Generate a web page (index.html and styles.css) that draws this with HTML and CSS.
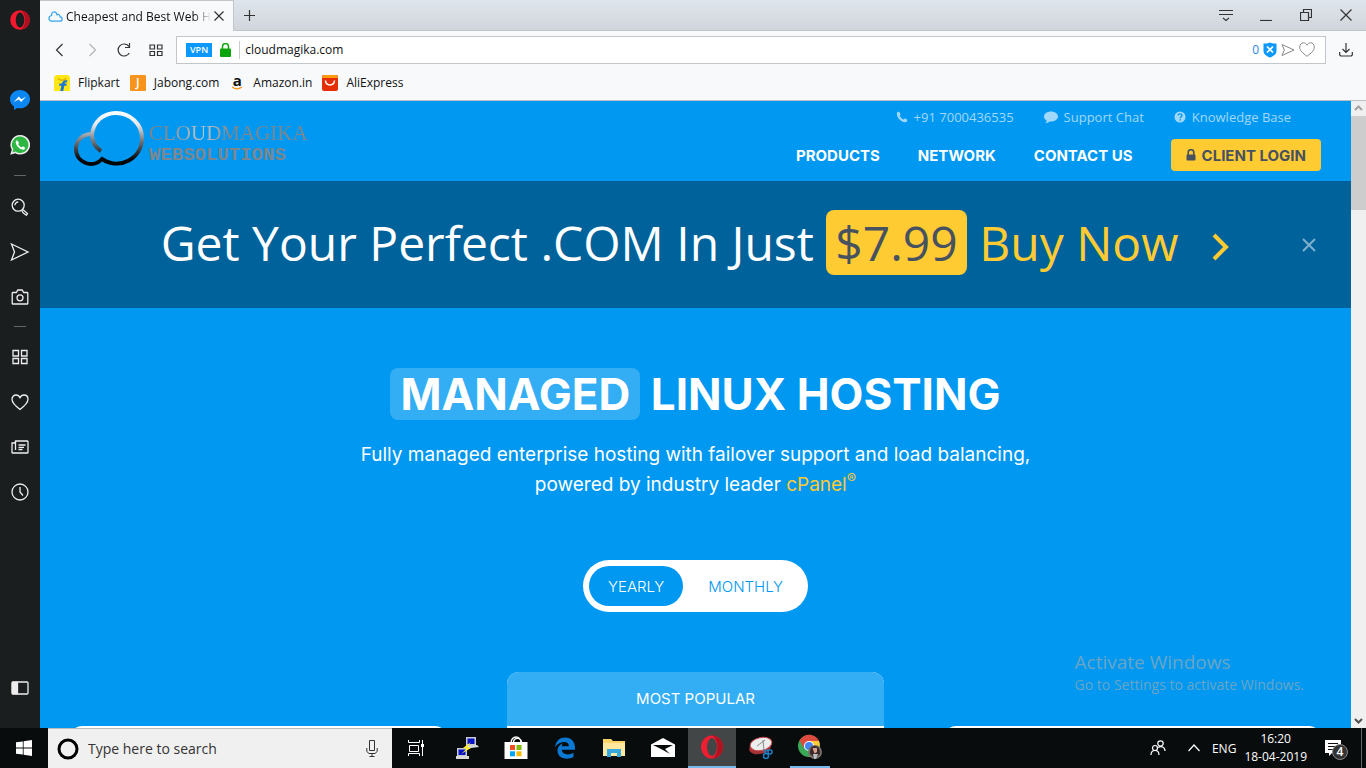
FILE: index.html
```
<!DOCTYPE html>
<html lang="en">
<head>
  <meta charset="UTF-8">
  <meta name="viewport" content="width=device-width, initial-scale=1.0">
  <title>Cheapest and Best Web Hosting</title>
  <link rel="stylesheet" href="styles.css">
</head>
<body>
  <div class="desktop">
    <aside class="sidebar">
      <button class="opera-btn" aria-label="Opera menu">
        <svg width="20" height="20" viewBox="0 0 20 20"><ellipse cx="10" cy="10" rx="9.8" ry="9.8" fill="#f4192e"/><path d="M10 .2a9.8 9.8 0 0 1 0 19.6c3-1 5-5 5-9.800s-2-8.800-5-9.800z" fill="#b0101e"/><ellipse cx="10" cy="10" rx="4.300" ry="7.500" fill="#1b1e1f"/></svg>
      </button>
      <button class="first" aria-label="Messenger">
        <svg width="20" height="20" viewBox="0 0 20 20"><path d="M10 0C4.500 0 0 4 0 9.200c0 3 1.500 5.600 4 7.300V20l3.500-2c.8.200 1.600.3 2.500.3 5.500 0 10-4 10-9.100S15.500 0 10 0z" fill="#0a86f5"/><path d="M3.800 12 8.800 6.600l2.600 2.600 4.800-2.600-5 5.400-2.500-2.600z" fill="#fff"/></svg>
      </button>
      <button aria-label="WhatsApp">
        <svg width="20" height="20" viewBox="0 0 20 20"><path d="M10.200 0A9.800 9.800 0 0 0 1.800 14.800L.2 19.800l5.200-1.500A9.800 9.800 0 1 0 10.200 0z" fill="#eee"/><path d="M10.200 1.600a8.200 8.200 0 0 0-6.800 12.900l-1 3 3.200-.9a8.200 8.200 0 1 0 4.600-15z" fill="#2db742"/><path d="M7 5.200c-1.200.6-1.600 2-1 3.600 1 2.700 3.200 4.900 6 5.800 1.700.5 3-.3 3.200-1.900l-2.300-1.400-1.300 1.200c-1.700-.7-2.800-1.800-3.500-3.400L9.200 8z" fill="#fff"/></svg>
      </button>
      <hr>
      <button aria-label="Search">
        <svg width="18" height="18" viewBox="0 0 18 18"><circle cx="7.200" cy="7.200" r="6"/><path d="M4 7.200a3.200 3.200 0 0 1 3.200-3.200M11.500 11.500l1.500 1 3.500 3-1.200 1.700-3.400-2.700-1-2"/></svg>
      </button>
      <button aria-label="My Flow">
        <svg width="20" height="20" viewBox="0 0 20 20"><path d="M1.500 2 18 10 1.500 18l3-8z"/></svg>
      </button>
      <button aria-label="Snapshot">
        <svg width="18" height="18" viewBox="0 0 18 18"><path d="M1.700 4.500h3.600l1.500-2.500h4.400l1.500 2.500h3.600l.5.500v10.500l-.5.500H1.700l-.5-.5V5z"/><circle cx="9" cy="9.800" r="3"/></svg>
      </button>
      <hr class="short">
      <button aria-label="Speed Dial">
        <svg width="18" height="18" viewBox="0 0 18 18"><path d="M2 2.500h5.500V8H2zM10.500 2.500H16V8h-5.500zM2 10.500h5.500v5H2zM10.500 10.500H16v5h-5.500z"/></svg>
      </button>
      <button aria-label="Bookmarks">
        <svg width="18" height="18" viewBox="0 0 18 18"><path d="M9 16.500C4 12.700 1 9.800 1 6.300 1 3.700 2.800 2 5 2c1.800 0 3.200 1 4 2.600C9.800 3 11.200 2 13 2c2.200 0 4 1.700 4 4.300 0 3.500-3 6.400-8 10.200z"/></svg>
      </button>
      <button aria-label="Personal news">
        <svg width="18" height="18" viewBox="0 0 18 18"><path d="M4.500 3h12l.5.500v11l-.5.500h-15l-.5-.5V5h3zM4.500 3v9M7.500 7h7M7.500 9.300H13M7.500 11.500h4"/></svg>
      </button>
      <button aria-label="History">
        <svg width="18" height="18" viewBox="0 0 18 18"><circle cx="9" cy="9" r="8"/><path d="M9 4v5l3 3.500"/></svg>
      </button>
      <button class="last" aria-label="Sidebar setup">
        <svg width="18" height="18" viewBox="0 0 18 18"><rect x="1" y="3" width="16" height="12" rx="1"/><path d="M1.500 3.500h5v11h-5z" fill="#eee"/></svg>
      </button>
    </aside>

    <div class="browser">
      <div class="tab-strip">
        <div class="tab">
          <svg width="15" height="11" viewBox="0 0 15 11" fill="none" stroke="#35a3ee" stroke-width="1.300"><path d="M3.500 10.200h8.200c3.200 0 3.200-4 .3-4.300.3-2-1.800-3-2.900-2C8-.2 3.200 0 3.600 4.500.2 5 0 9.700 3.500 10.200z"/></svg>
          <span class="tab-title">Cheapest and Best Web H</span>
          <button class="tab-close" aria-label="Close tab"><svg width="10" height="10" viewBox="0 0 10 10"><path d="m.5.500 9 9m0-9-9 9"/></svg></button>
        </div>
        <button class="new-tab" aria-label="New tab"><svg width="11" height="11" viewBox="0 0 11 11"><path d="M5.500 0v11M0 5.500h11"/></svg></button>
        <div class="window-buttons">
          <button aria-label="Tab menu"><svg width="14" height="13" viewBox="0 0 14 13"><path d="M0 1.500h14M0 5.500h14M4 9l3 2.500L10 9"/></svg></button>
          <button aria-label="Minimize"><svg width="12" height="12" viewBox="0 0 12 12"><path d="M0 11.500h12"/></svg></button>
          <button aria-label="Restore"><svg width="12" height="12" viewBox="0 0 12 12"><path d="M.5 3.500h8v8h-8zM3.500 3V.5h8v8H9"/></svg></button>
          <button aria-label="Close window"><svg width="12" height="12" viewBox="0 0 12 12"><path d="m.5.500 11 11m0-11-11 11"/></svg></button>
        </div>
      </div>

      <div class="address-row">
        <div class="nav-buttons">
          <button aria-label="Back"><svg width="16" height="16" viewBox="0 0 16 16"><path d="M10.500 2 4.500 8l6 6"/></svg></button>
          <button class="off" aria-label="Forward"><svg width="16" height="16" viewBox="0 0 16 16"><path d="m5.500 2 6 6-6 6"/></svg></button>
          <button aria-label="Reload"><svg width="16" height="16" viewBox="0 0 16 16"><path d="M13.300 11A6 6 0 1 1 13 4.500M13.500 1v4.500H9"/></svg></button>
          <button aria-label="Speed Dial"><svg width="16" height="16" viewBox="0 0 16 16"><path d="M2 3h4.500v4H2zM9.500 3H14v4H9.500zM2 9.500h4.500v4H2zM9.500 9.500H14v4H9.500z"/></svg></button>
        </div>
        <div class="address-box">
          <span class="vpn">VPN</span>
          <svg width="11" height="14" viewBox="0 0 11 14"><path d="M2.500 6V3.500a3 3 0 0 1 6 0V6" fill="none" stroke="#0ca50c" stroke-width="1.500"/><rect y="5.500" width="11" height="8.500" rx="1" fill="#0ca50c"/></svg>
          <input type="text" value="cloudmagika.com" aria-label="Address">
          <span class="blocked">0</span>
          <svg width="14" height="16" viewBox="0 0 14 16"><path d="M7 .5c2 1 4 1 6.500 1V9c0 3-2.500 5-6.500 6.500C3 14 .5 12 .5 9V1.500C3 1.500 5 1.500 7 .5z" fill="#0a98fb"/><path d="m4 4.500 6 6m0-6-6 6" stroke="#fff" stroke-width="1.700"/></svg>
          <svg class="line-icon" width="14" height="14" viewBox="0 0 14 14"><path d="M1 1.500 13 7 1 12.500 3.300 7z"/></svg>
          <svg class="line-icon" width="16" height="15" viewBox="0 0 16 15"><path d="M8 14.300C3.500 11 .7 8.500.7 5.200.7 2.500 2.300.8 4.500.8 6 .8 7.300 1.700 8 3.300 8.700 1.700 10 .8 11.500.8c2.200 0 3.800 1.700 3.800 4.400 0 3.300-2.800 5.800-7.300 9.100z"/></svg>
        </div>
        <button class="download" aria-label="Downloads"><svg width="14" height="14" viewBox="0 0 14 14"><path d="M7 0v9M3.500 6 7 9.500 10.500 6M.7 9v3l1 1h10.600l1-1V9"/></svg></button>
      </div>

      <nav class="bookmarks">
        <a href="#"><svg width="16" height="16" viewBox="0 0 16 16"><path d="M0 2 2 0h12l2 2v14H0z" fill="#ffe614"/><path d="M4 3c1 3 7 3 8 0" fill="none" stroke="#e2b500" stroke-width="1.300"/><path d="M13.500 5.500C10 4.500 8.500 6 8 8.500H5.500L5 10.700h2.400L6.300 16h2.900l1.100-5.300h2l.4-2.200h-2c.3-1.200 1-1.500 2.300-1.200z" fill="#1b74d8"/></svg>Flipkart</a>
        <a href="#"><span class="jabong">J</span>Jabong.com</a>
        <a href="#"><span class="amazon">a<svg width="12" height="4" viewBox="0 0 12 4"><path d="M1 1c3 2.200 7 2.200 10 0" fill="none" stroke="#f79a1c" stroke-width="1.400"/></svg></span>Amazon.in</a>
        <a href="#"><svg width="16" height="16" viewBox="0 0 16 16"><rect width="16" height="16" rx="2" fill="#e62e04"/><path d="M0 3V2L2 0h12l2 2v1z" fill="#fb9b10"/><path d="M3.500 5.500c.5 6 8.500 6 9 0" fill="none" stroke="#fff" stroke-width="1.500"/></svg>AliExpress</a>
      </nav>

      <div class="viewport">
        <main class="page">
          <header class="site-header">
            <a class="logo" href="#" aria-label="Cloudmagika Websolutions">
              <svg width="70" height="56" viewBox="0 0 70 56" fill="none">
                <defs>
                  <linearGradient id="metal" x1="0" y1="0" x2="0" y2="56" gradientUnits="userSpaceOnUse">
                    <stop offset="0" stop-color="#fff"/>
                    <stop offset=".25" stop-color="#e4e8ec"/>
                    <stop offset=".55" stop-color="#6b7278"/>
                    <stop offset=".85" stop-color="#08090a"/>
                    <stop offset="1" stop-color="#000"/>
                  </linearGradient>
                </defs>
                <path d="M27 40C21 36 18 31 18 24 19 11 29 2 42 2c14 0 26 11 26 25 0 20-22 33-40 21-9 10-26 4-26-10 0-9 7-15 16-15" stroke="url(#metal)" stroke-width="4"/>
              </svg>
              <span class="logo-text"><span class="logo-name">CLOUDMAGIKA</span><span class="logo-sub">WEBSOLUTIONS</span></span>
            </a>
            <div class="header-right">
              <div class="top-links">
                <a href="#"><svg width="12" height="12" viewBox="0 0 12 12"><path d="M3 .5 1 1.500C-.2 6 6 12.500 10.500 11l1-2L9 7.300 7.600 8.500C6 7.800 4.500 6.300 3.700 4.700L4.600 3.300z"/></svg>+91 7000436535</a>
                <a href="#"><svg width="14" height="12" viewBox="0 0 14 12"><path d="M7 .5c3.900 0 7 2.200 7 5s-3.100 5-7 5l-1.500-.1C4.300 11.500 2.800 12 1.500 12c.8-.8 1.200-1.700 1.200-2.600C1 8.500 0 7.100 0 5.500c0-2.800 3.100-5 7-5z"/></svg>Support Chat</a>
                <a href="#"><svg width="12" height="12" viewBox="0 0 12 12"><circle cx="6" cy="6" r="5.500"/><path d="M4 4.400c.2-2 4-2 4 0C8 5.700 6.200 5.700 6.200 7.200M6.200 8.200v1.400" fill="none" stroke="#0098f0" stroke-width="1.400"/></svg>Knowledge Base</a>
              </div>
              <nav class="main-nav">
                <a href="#">PRODUCTS</a>
                <a href="#">NETWORK</a>
                <a href="#">CONTACT US</a>
                <a href="#" class="login"><svg width="10" height="12" viewBox="0 0 10 12"><path d="M2.200 6V3.500a2.800 2.800 0 0 1 5.600 0V6" fill="none" stroke="#475160" stroke-width="1.600"/><rect x=".5" y="5.500" width="9" height="6" rx="1" fill="#475160"/></svg>CLIENT LOGIN</a>
              </nav>
            </div>
          </header>

          <section class="promo">
            <p>Get Your Perfect .COM In Just <span class="price">$7.99</span> <a href="#">Buy Now<svg width="18" height="28" viewBox="0 0 18 28"><path d="m2 2 12 12L2 26" fill="none" stroke="#ffcb32" stroke-width="4"/></svg></a></p>
            <button class="promo-close" aria-label="Close offer"><svg width="14" height="14" viewBox="0 0 14 14"><path d="m1 1 12 12m0-12L1 13"/></svg></button>
          </section>

          <section class="hero">
            <h1><span class="mark">MANAGED</span> LINUX HOSTING</h1>
            <p>Fully managed enterprise hosting with failover support and load balancing,<br>powered by industry leader <a href="#">cPanel<sup>®</sup></a></p>
            <div class="billing">
              <button class="active" aria-pressed="true">YEARLY</button>
              <button aria-pressed="false">MONTHLY</button>
            </div>
            <div class="plans">
              <div class="plan"></div>
              <div class="plan popular"><div class="plan-tag">MOST POPULAR</div></div>
              <div class="plan"></div>
            </div>
          </section>
        </main>
        <div class="scrollbar">
          <svg width="15" height="15" viewBox="0 0 15 15"><path d="m4 9 3.500-3.500L11 9" stroke="#a3a3a3"/></svg>
          <div class="thumb"></div>
          <svg class="down" width="15" height="15" viewBox="0 0 15 15"><path d="m4 6 3.500 3.500L11 6" stroke="#505050"/></svg>
        </div>
      </div>
    </div>
    <div class="watermark">
      <div class="watermark-title">Activate Windows</div>
      <div>Go to Settings to activate Windows.</div>
    </div>
  </div>

  <footer class="taskbar">
    <button class="start" aria-label="Start"><svg width="16" height="16" viewBox="0 0 16 16" fill="#fff"><path d="M0 2.300 6.800 1.400v6.200H0zM7.600 1.300 16 0v7.600H7.600zM0 8.400h6.800v6.200L0 13.700zM7.600 8.400H16V16l-8.400-1.300z"/></svg></button>
    <label class="task-search">
      <svg width="22" height="22" viewBox="0 0 22 22"><circle cx="11" cy="11" r="9" fill="none" stroke="#000" stroke-width="3"/></svg>
      <input type="text" placeholder="Type here to search" aria-label="Type here to search">
      <svg width="12" height="17" viewBox="0 0 12 17" fill="none" stroke="#333"><path d="M3.500.5h5v10h-5zM.8 8v3.500L3 13.500h6l2.200-2V8M6 13.500v3M3.500 16.500h5"/></svg>
    </label>
    <div class="tasks">
      <button class="task-view" aria-label="Task view"><svg width="17" height="16" viewBox="0 0 17 16" fill="none" stroke="#fff"><path d="M.5 0v2.500h11V0M1.500 5.500h9v6h-9zM.5 16v-2.500h11V16M14.500 0v16"/><path d="M13 4h3v3h-3z" fill="#fff" stroke="none"/></svg></button>
      <button aria-label="PuTTY"><svg width="24" height="24" viewBox="0 0 24 24"><path d="M11 1h10v9H11zM2 12h10v8H2z" fill="#c8ccd0"/><path d="M12.500 2.500h7v5.500h-7zM3.500 13.500h7V19h-7z" fill="#0812c8"/><path d="m10 10 12-1 2 2-12 1.500zM1 20h13v3H1z" fill="#d9d9d9"/><path d="m16 6-8 6 4 .5L6 18l10-6-4-1z" fill="#ffef15"/></svg></button>
      <button aria-label="Microsoft Store"><svg width="24" height="24" viewBox="0 0 24 24"><path d="M7 7C7-1 17-1 17 7M9.500 6c0-5 8-5 8 1" fill="none" stroke="#fff" stroke-width="1.400"/><path d="M.5 6h23v17h-23z" fill="#fff"/><path d="M6 9h5v5H6z" fill="#f25022"/><path d="M12.500 9h5v5h-5z" fill="#7fba00"/><path d="M6 15.300h5v5H6z" fill="#00a4ef"/><path d="M12.500 15.300h5v5h-5z" fill="#ffb900"/></svg></button>
      <button aria-label="Edge"><svg width="22" height="22" viewBox="0 0 22 22"><path d="M1 10C2 3.500 6 .5 11.300.5 17.500.5 21 5 21 10.500v2.300H7.800c.3 5.200 7.300 5.700 11.700 3v4.300C12 23.700 3.500 21 3.500 13.800 3.500 10 6 7.500 9 6.200c-.8.9-1.200 1.900-1.300 3h7.200c0-6.200-9.400-5.200-13.900.8z" fill="#0b78d4"/></svg></button>
      <button aria-label="File Explorer"><svg width="22" height="20" viewBox="0 0 22 20"><path d="M0 1h8l2 2h12v15H0z" fill="#fbd468"/><path d="M0 5h22v13H0z" fill="#ffe99f"/><path d="M4 19v-8h14v8h-4v-4H8v4z" fill="#38a9e0"/></svg></button>
      <button aria-label="Mail"><svg width="24" height="20" viewBox="0 0 24 20"><path d="M0 6.500 12 0l12 6.500V19H0z" fill="#fff"/><path d="M2 7h20l-8 4 5 5-8-4.500z" fill="#050808"/></svg></button>
      <button class="open current" aria-label="Opera"><svg width="22" height="24" viewBox="0 0 22 24"><ellipse cx="11" cy="12" rx="11" ry="11.500" fill="#ee1f31"/><path d="M11 .5c6 0 11 5 11 11.500s-5 11.500-11 11.500c4-2 5.500-6.500 5.500-11.500S15 2.500 11 .5z" fill="#b0121f"/><ellipse cx="11" cy="12" rx="5" ry="9" fill="#424647"/></svg></button>
      <button aria-label="Snipping Tool"><svg width="24" height="24" viewBox="0 0 24 24"><ellipse cx="11" cy="12" rx="11" ry="6" fill="#a53335" transform="rotate(-12 11 12)"/><ellipse cx="12" cy="8" rx="11" ry="6.500" fill="#eceeee" stroke="#c9474a" transform="rotate(-12 12 8)"/><path d="m8 10 8-6M14 4l1 11" stroke="#888"/><path d="m15 14 2 3m0-3 3 1" stroke="#1b7fc4" stroke-width="1.500"/><circle cx="21" cy="16" r="2" fill="none" stroke="#1b7fc4" stroke-width="1.500"/><circle cx="17" cy="20" r="2.500" fill="none" stroke="#1b7fc4" stroke-width="1.500"/></svg></button>
      <button class="open" aria-label="Chrome"><svg width="26" height="26" viewBox="0 0 26 26"><circle cx="12" cy="12" r="11" fill="#3aa757"/><path d="M2.500 6.500C7-1.500 18-1 22 7H12l-5 7z" fill="#dd4b3e"/><path d="M12 7h10c3 8-3 16-10 16l5-9z" fill="#fc3"/><circle cx="12" cy="12" r="5" fill="#fff"/><circle cx="12" cy="12" r="4" fill="#4285f4"/><circle cx="18" cy="18" r="7" fill="#776f6a"/><path d="M13 20c0-6 1-8 5-8 4 0 5 4 5 8l-5 4z" fill="#3c2927"/><path d="M15.500 14h4.500v4l-2.500 1.500z" fill="#d5a48c"/><path d="M16 20h5l-2 5h-2z" fill="#b9bdc4"/></svg></button>
    </div>
    <div class="tray">
      <button aria-label="People"><svg width="16" height="16" viewBox="0 0 16 16" fill="none" stroke="#fff" stroke-width="1.200"><circle cx="10.500" cy="3.500" r="2.700"/><circle cx="5" cy="8" r="2.500"/><path d="M1 15c0-6 8-6 8 0M8 7.500c3-2 7-.5 7 3.500"/></svg></button>
      <button aria-label="Show hidden icons"><svg width="12" height="8" viewBox="0 0 12 8" fill="none" stroke="#fff" stroke-width="1.200"><path d="m.5 7 5.500-6 5.500 6"/></svg></button>
      <span class="lang">ENG</span>
      <div class="clock"><span>16:20</span><span>18-04-2019</span></div>
      <button class="notify" aria-label="4 notifications"><svg width="16" height="16" viewBox="0 0 16 16"><path d="M0 0h16v13H7l-3 3v-3H0z" fill="#fff"/><path d="M3 3.500h10M3 6.500h10M3 9.500h10" stroke="#0b0f10"/></svg><span class="badge">4</span></button>
      <div class="show-desktop"></div>
    </div>
  </footer>
</body>
</html>
```

FILE: styles.css
```
* {
  box-sizing: border-box;
}
body {
  margin: 0;
  height: 100vh;
  display: flex;
  flex-direction: column;
  overflow: hidden;
  font-family: "Open Sans", "Noto Sans", sans-serif;
  font-size: 12px;
  color: #111;
}
button {
  background: none;
  border: none;
  padding: 0;
  font: inherit;
  color: inherit;
  display: flex;
  align-items: center;
  justify-content: center;
  cursor: pointer;
}
input {
  border: none;
  outline: none;
  background: none;
  padding: 0;
  font: inherit;
  color: inherit;
  min-width: 0;
}
a {
  color: inherit;
  text-decoration: none;
}
svg {
  flex: none;
}
.desktop {
  flex: 1;
  min-height: 0;
  display: flex;
  position: relative;
}

/* opera sidebar */
.sidebar {
  width: 40px;
  background: #1b1e1f;
  display: flex;
  flex-direction: column;
  align-items: center;
  padding-bottom: 18px;
}
.sidebar button {
  width: 40px;
  height: 45px;
}
.sidebar svg {
  fill: none;
  stroke: #eee;
  stroke-width: 1.3;
}
.sidebar .opera-btn {
  height: 40px;
}
.sidebar .opera-btn svg, .sidebar .first svg, .sidebar .first + button svg {
  stroke: none;
}
.sidebar .first {
  margin-top: 37px;
}
.sidebar .last {
  margin-top: auto;
}
.sidebar hr {
  width: 12px;
  margin: 8px 0;
  border: none;
  border-top: 1px solid #666;
}
.sidebar hr.short {
  margin: 7px 0;
}

/* browser chrome */
.browser {
  flex: 1;
  min-width: 0;
  display: flex;
  flex-direction: column;
  background: #f8f9fb;
}
.tab-strip {
  height: 31px;
  display: flex;
  background: linear-gradient(#dfe5ec, #d1d6dd);
  border-bottom: 1px solid #c2c6ca;
}
.tab-strip svg, .nav-buttons svg, .download svg {
  fill: none;
  stroke: #333;
  stroke-width: 1.2;
}
.tab-strip .tab > svg {
  stroke: #35a3ee;
}
.tab {
  width: 194px;
  height: 31px;
  padding: 0 9px 0 8px;
  display: flex;
  align-items: center;
  gap: 3px;
  background: #f8f9fb;
  border-top: 1px solid #c2c6ca;
  border-right: 1px solid #c2c6ca;
}
.tab-title {
  flex: 1;
  overflow: hidden;
  white-space: nowrap;
  -webkit-mask-image: linear-gradient(to right, #000 88%, transparent);
  mask-image: linear-gradient(to right, #000 88%, transparent);
}
.new-tab {
  width: 30px;
}
.window-buttons {
  margin-left: auto;
  display: flex;
}
.window-buttons button {
  width: 40px;
}
.address-row {
  height: 37px;
  display: flex;
  align-items: center;
}
.nav-buttons {
  width: 136px;
  display: flex;
  gap: 16px;
  padding-left: 12px;
}
.nav-buttons .off {
  opacity: .35;
}
.address-box {
  flex: 1;
  height: 28px;
  display: flex;
  align-items: center;
  gap: 4px;
  padding: 0 10px 0 9px;
  background: #fff;
  border: 1px solid #c2c6ca;
}
.vpn {
  margin-right: 4px;
  padding: 0 4px;
  font-size: 9px;
  line-height: 14px;
  font-weight: 600;
  color: #fff;
  background: #0a98fb;
}
.address-box input {
  flex: 1;
  height: 18px;
  margin-left: 4px;
  padding-left: 5px;
  border-left: 1px solid #ccc;
}
.blocked {
  color: #1f87e8;
}
.line-icon {
  fill: none;
  stroke: #888;
}
.download {
  width: 40px;
}
.bookmarks {
  height: 32px;
  display: flex;
  align-items: center;
  gap: 10px;
  padding: 0 14px 3px;
}
.bookmarks a {
  display: flex;
  align-items: center;
  gap: 8px;
}
.jabong {
  width: 16px;
  line-height: 16px;
  text-align: center;
  color: #fff;
  font-weight: 600;
  background: #f7941e;
  border-radius: 1px;
}
.amazon {
  width: 16px;
  height: 16px;
  display: flex;
  flex-direction: column;
  align-items: center;
  font-size: 15px;
  line-height: 11px;
  font-weight: 700;
}

/* web page */
.viewport {
  flex: 1;
  min-height: 0;
  display: flex;
  border-top: 1px solid #bcc0c4;
}
.page {
  flex: 1;
  overflow: hidden;
  background: #0098f0;
  color: #fff;
}
.scrollbar {
  width: 15px;
  background: #f0f0f0;
  display: flex;
  flex-direction: column;
}
.scrollbar svg {
  fill: none;
  stroke-width: 2;
}
.thumb {
  height: 94px;
  background: #cdcdcd;
}
.scrollbar .down {
  margin-top: auto;
}
.site-header {
  height: 80px;
  padding: 10px 30px;
  display: flex;
  justify-content: space-between;
}
.logo {
  display: flex;
  gap: 5px;
  padding-left: 4px;
}
.logo-text {
  display: flex;
  flex-direction: column;
  justify-content: center;
}
.logo-name {
  font: 21px/28px "Liberation Serif", serif;
  color: transparent;
  background: linear-gradient(100deg, #808488 10%, #c2c8cd 35%, #80868b 50%);
  -webkit-background-clip: text;
  background-clip: text;
}
.logo-sub {
  font: bold 19px/16px "Liberation Mono", monospace;
  color: #7c868e;
}
.header-right {
  display: flex;
  flex-direction: column;
  align-items: flex-end;
}
.top-links {
  display: flex;
  gap: 30px;
  height: 12px;
  padding-right: 30px;
  font-size: 13px;
  color: #a0d8fa;
}
.top-links a {
  display: flex;
  align-items: center;
  gap: 6px;
}
.top-links svg {
  fill: #a0d8fa;
}
.main-nav {
  display: flex;
  align-items: center;
  gap: 38px;
  margin-top: 16px;
  font-family: Inter, sans-serif;
  font-size: 15px;
  font-weight: 700;
}
.login {
  height: 32px;
  padding: 0 15px;
  display: flex;
  align-items: center;
  gap: 6px;
  color: #475160;
  background: #ffcb32;
  border-radius: 4px;
}
.promo {
  height: 127px;
  padding: 0 35px;
  display: flex;
  align-items: center;
  background: #00629b;
}
.promo p {
  flex: 1;
  margin: 0;
  padding: 0 0 4px 14px;
  text-align: center;
  font-size: 48px;
}
.price {
  padding: 0 9px;
  color: #475160;
  background: #ffcb32;
  border-radius: 8px;
}
.promo a {
  color: #ffcb32;
}
.promo a svg {
  margin-left: 34px;
}
.promo-close svg {
  stroke: #80b0cd;
  stroke-width: 2;
}
.hero {
  padding: 60px 30px;
  text-align: center;
  font-family: Inter, sans-serif;
}
.hero h1 {
  margin: 0;
  font-size: 44px;
  line-height: 52px;
  font-weight: 700;
}
.mark {
  display: inline-block;
  padding: 0 10px;
  background: #33adf3;
  border-radius: 8px;
}
.hero p {
  margin: 20px 0 60px;
  font-size: 19px;
  line-height: 30px;
}
.hero p a {
  color: #ffcb32;
}
.hero sup {
  font-size: 14px;
  line-height: 0;
}
.billing {
  width: fit-content;
  margin: 0 auto 60px;
  padding: 6px;
  display: flex;
  gap: 6px;
  background: #fff;
  border-radius: 26px;
  font-size: 15px;
  color: #0098f0;
}
.billing button {
  height: 40px;
  padding: 0 19px;
  border-radius: 20px;
  font-weight: 300;
}
.billing .active {
  color: #fff;
  background: #0098f0;
}
.plans {
  display: grid;
  grid-template-columns: repeat(3, 1fr);
  gap: 60px;
}
.plan {
  height: 400px;
  margin-top: 54px;
  background: #fff;
  border-radius: 12px;
}
.popular {
  margin-top: 0;
  overflow: hidden;
}
.plan-tag {
  font-size: 15px;
  line-height: 54px;
  background: #33adf3;
}
.watermark {
  position: absolute;
  right: 62px;
  bottom: 32px;
  font-size: 14px;
  line-height: 22px;
  color: #6ba5c6;
}
.watermark-title {
  font-size: 19px;
  line-height: 24px;
}

/* windows taskbar */
.taskbar {
  height: 40px;
  display: flex;
  background: #080c0d;
  color: #fff;
}
.start {
  width: 48px;
}
.task-search {
  width: 344px;
  padding: 0 14px 0 9px;
  display: flex;
  align-items: center;
  gap: 9px;
  background: #f0f0f0;
  border-top: 1px solid #bbb;
  font-size: 14px;
  color: #333;
}
.task-search input {
  flex: 1;
}
.task-search input::placeholder {
  color: #333;
}
.tasks {
  display: flex;
  gap: 1px;
}
.tasks button {
  width: 48px;
}
.tasks .task-view {
  margin-right: 2px;
}
.tasks .open {
  width: 40px;
  margin: 0 4px;
  border-bottom: 2px solid #76b9ed;
}
.tasks .current {
  width: 48px;
  margin: 0;
  background: #424647;
}
.tray {
  margin-left: auto;
  display: flex;
  align-items: center;
  gap: 12px;
}
.tray button {
  width: 24px;
}
.lang {
  margin-left: -6px;
}
.clock {
  margin-left: -4px;
  display: flex;
  flex-direction: column;
  align-items: center;
  line-height: 18px;
}
.notify {
  position: relative;
  margin: 0 4px 0 2px;
}
.badge {
  position: absolute;
  left: 11px;
  top: 4px;
  width: 16px;
  line-height: 14px;
  font-weight: 600;
  background: #333;
  border: 1px solid #888;
  border-radius: 50%;
}
.show-desktop {
  align-self: stretch;
  width: 5px;
  border-left: 1px solid #666;
}
```
